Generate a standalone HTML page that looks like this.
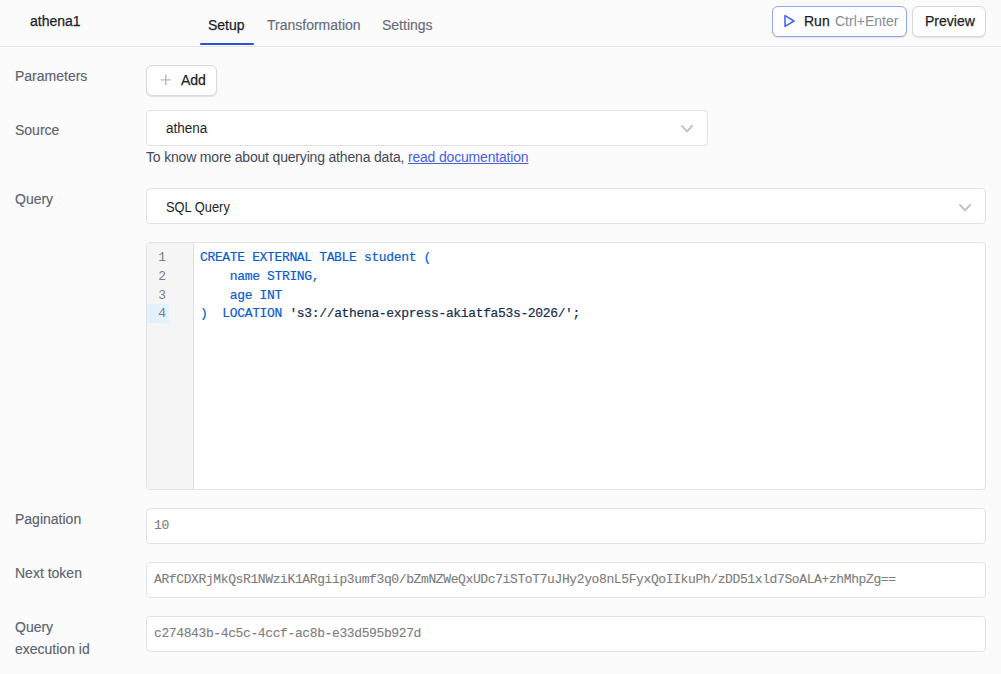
<!DOCTYPE html>
<html>
<head>
<meta charset="utf-8">
<style>
*{box-sizing:border-box;}
html,body{margin:0;padding:0;}
body{width:1001px;height:674px;overflow:hidden;background:#fbfbfc;font-family:"Liberation Sans",sans-serif;font-size:14px;color:#1b1f24;position:relative;}
.abs{position:absolute;white-space:nowrap;}
.hdr{position:absolute;left:0;top:0;width:1001px;height:47px;border-bottom:1px solid #e3e6ea;}
.title{left:30px;top:13px;line-height:16px;color:#1b1f24;}
.tab{top:17px;line-height:16px;color:#656c78;-webkit-text-stroke:0.15px currentColor;}
.tab.active{color:#1b1f24;}
.tabline{position:absolute;left:200px;top:43px;width:54px;height:2px;background:#2a52d6;border-radius:1px;}
.btn{position:absolute;background:#fff;border:1px solid #d6d9de;border-radius:6px;box-shadow:0 1px 1px rgba(0,0,0,0.10);}
.label{left:15px;color:#5b6270;line-height:22px;-webkit-text-stroke:0.15px currentColor;}
.field{position:absolute;left:146px;width:840px;height:36px;background:#fff;border:1px solid #dfe2e7;border-radius:4px;}
.mono{font-family:"Liberation Mono",monospace;}
.med{-webkit-text-stroke:0.25px currentColor;}
.chev{position:absolute;width:14px;height:9px;}
.code{position:absolute;left:146px;top:242px;width:840px;height:248px;background:#fff;border:1px solid #dfe2e7;border-radius:4px;overflow:hidden;}
.gutter{position:absolute;left:0;top:0;width:47px;height:100%;background:#f5f5f5;border-right:1px solid #dde0e4;}
.ln{position:absolute;left:0;width:19px;height:19px;line-height:19px;text-align:right;color:#7a7f87;font-family:"Liberation Mono",monospace;font-size:13px;}
.cl{position:absolute;left:53px;height:19px;line-height:19px;font-family:"Liberation Mono",monospace;font-size:13px;letter-spacing:-0.35px;color:#0b5cd0;white-space:pre;-webkit-text-stroke:0.2px currentColor;}
.inptxt{position:absolute;left:7px;font-family:"Liberation Mono",monospace;font-size:13px;letter-spacing:-0.385px;color:#7d7d7d;white-space:pre;line-height:19px;-webkit-text-stroke:0.12px currentColor;}
</style>
</head>
<body>
<div class="hdr"></div>
<div class="abs title med">athena1</div>
<div class="abs tab active med" style="left:208px;">Setup</div>
<div class="abs tab" style="left:267px;">Transformation</div>
<div class="abs tab" style="left:382px;">Settings</div>
<div class="tabline"></div>

<div class="btn" style="left:772px;top:6px;width:135px;height:31px;border-color:#8ea6f4;"></div>
<svg class="abs" style="left:783px;top:13px;" width="14" height="16" viewBox="0 0 14 16"><path d="M2 2.6 L11 8 L2 13.4 Z" fill="none" stroke="#4668ea" stroke-width="1.6" stroke-linejoin="round"/></svg>
<div class="abs med" style="left:804px;top:13px;line-height:16px;color:#1b1f24;">Run</div>
<div class="abs" style="left:835px;top:13px;line-height:16px;color:#858b95;">Ctrl+Enter</div>
<div class="btn" style="left:912px;top:6px;width:74px;height:31px;"></div>
<div class="abs med" style="left:925px;top:13px;line-height:16px;color:#1b1f24;">Preview</div>

<!-- Parameters -->
<div class="abs label" style="top:65px;">Parameters</div>
<div class="btn" style="left:146px;top:65px;width:71px;height:31px;"></div>
<svg class="abs" style="left:160px;top:74px;" width="12" height="12" viewBox="0 0 12 12"><path d="M5.8 0.5 V10.9 M0.8 5.9 H10.9" stroke="#b3b8c0" stroke-width="1.4"/></svg>
<div class="abs med" style="left:181px;top:72px;line-height:16px;color:#1b1f24;">Add</div>

<!-- Source -->
<div class="abs label" style="top:119px;">Source</div>
<div class="field" style="top:110px;width:562px;"></div>
<div class="abs" style="left:166px;top:120px;line-height:16px;transform:scaleX(0.965);transform-origin:0 0;">athena</div>
<svg class="chev" style="left:680px;top:124px;" viewBox="0 0 14 9"><path d="M1.4 1.4 L7 7.4 L12.6 1.4" fill="none" stroke="#bfc1c5" stroke-width="2"/></svg>
<div class="abs" style="left:146px;top:149px;line-height:16px;color:#434a57;letter-spacing:-0.18px;">To know more about querying athena data, <span style="color:#4a5fe0;text-decoration:underline;">read documentation</span></div>

<!-- Query -->
<div class="abs label" style="top:188px;">Query</div>
<div class="field" style="top:188px;"></div>
<div class="abs" style="left:166px;top:199px;line-height:16px;transform:scaleX(0.918);transform-origin:0 0;">SQL Query</div>
<svg class="chev" style="left:958px;top:203px;" viewBox="0 0 14 9"><path d="M1.4 1.4 L7 7.4 L12.6 1.4" fill="none" stroke="#bfc1c5" stroke-width="2"/></svg>

<!-- Code editor -->
<div class="code">
  <div class="gutter">
    <div style="position:absolute;left:0;top:61px;width:22px;height:19px;background:#e3f1fc;"></div>
    <div class="ln" style="top:5px;">1</div>
    <div class="ln" style="top:24px;">2</div>
    <div class="ln" style="top:43px;">3</div>
    <div class="ln" style="top:61px;">4</div>
  </div>
  <div class="cl" style="top:5px;">CREATE EXTERNAL TABLE student (</div>
  <div class="cl" style="top:24px;">    name STRING,</div>
  <div class="cl" style="top:43px;">    age INT</div>
  <div class="cl" style="top:61px;">)  LOCATION <span style="color:#172b4d">'s3://athena-express-akiatfa53s-2026/';</span></div>
</div>

<!-- Pagination -->
<div class="abs label" style="top:508px;">Pagination</div>
<div class="field" style="top:508px;"><div class="inptxt" style="top:7px;">10</div></div>

<!-- Next token -->
<div class="abs label" style="top:562px;">Next token</div>
<div class="field" style="top:562px;"><div class="inptxt" style="top:7px;">ARfCDXRjMkQsR1NWziK1ARgiip3umf3q0/bZmNZWeQxUDc7iSToT7uJHy2yo8nL5FyxQoIIkuPh/zDD51xld7SoALA+zhMhpZg==</div></div>

<!-- Query execution id -->
<div class="abs label" style="top:616px;">Query<br>execution id</div>
<div class="field" style="top:616px;"><div class="inptxt" style="top:7px;">c274843b-4c5c-4ccf-ac8b-e33d595b927d</div></div>
</body>
</html>
